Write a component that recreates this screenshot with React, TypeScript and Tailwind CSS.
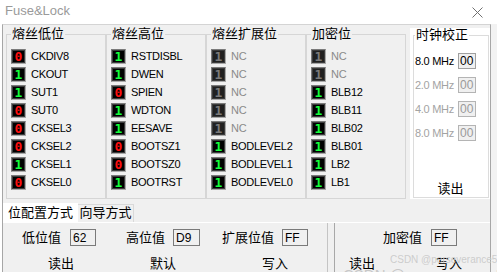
import React from "react";

type Bit = { v: string; name: string; nc?: boolean };

const low: Bit[] = [
  { v: "0", name: "CKDIV8" },
  { v: "1", name: "CKOUT" },
  { v: "1", name: "SUT1" },
  { v: "0", name: "SUT0" },
  { v: "0", name: "CKSEL3" },
  { v: "0", name: "CKSEL2" },
  { v: "1", name: "CKSEL1" },
  { v: "0", name: "CKSEL0" },
];
const high: Bit[] = [
  { v: "1", name: "RSTDISBL" },
  { v: "1", name: "DWEN" },
  { v: "0", name: "SPIEN" },
  { v: "1", name: "WDTON" },
  { v: "1", name: "EESAVE" },
  { v: "0", name: "BOOTSZ1" },
  { v: "0", name: "BOOTSZ0" },
  { v: "1", name: "BOOTRST" },
];
const ext: Bit[] = [
  { v: "1", name: "NC", nc: true },
  { v: "1", name: "NC", nc: true },
  { v: "1", name: "NC", nc: true },
  { v: "1", name: "NC", nc: true },
  { v: "1", name: "NC", nc: true },
  { v: "1", name: "BODLEVEL2" },
  { v: "1", name: "BODLEVEL1" },
  { v: "1", name: "BODLEVEL0" },
];
const lock: Bit[] = [
  { v: "1", name: "NC", nc: true },
  { v: "1", name: "NC", nc: true },
  { v: "1", name: "BLB12" },
  { v: "1", name: "BLB11" },
  { v: "1", name: "BLB02" },
  { v: "1", name: "BLB01" },
  { v: "1", name: "LB2" },
  { v: "1", name: "LB1" },
];

function Indicator({ v, nc }: { v: string; nc?: boolean }) {
  const color = nc ? "text-[#7a7a7a]" : v === "1" ? "text-[#14ff3c]" : "text-[#ff1010]";
  return (
    <div
      className={`flex h-[15px] w-[15px] shrink-0 items-center justify-center border border-t-[#7a7a7a] border-l-[#7a7a7a] border-b-[#a8a8a8] border-r-[#a8a8a8] shadow-[inset_0_0_0_1px_#3c3c3c] ${
        nc ? "bg-[#202020]" : "bg-black"
      }`}
    >
      <span className={`font-['DejaVu_Sans_Mono',monospace] text-[13px] font-bold leading-none ${color}`}>{v}</span>
    </div>
  );
}

function Group({ title, bits }: { title: string; bits: Bit[] }) {
  return (
    <fieldset className="h-[172px] w-[100px] shrink-0 border border-[#d6d6d6]">
      <legend className="ml-[4px] px-[1px] text-[13px] leading-[14px] text-black">{title}</legend>
      <div className="pl-[4px] pt-[6px]">
        {bits.map((b, i) => (
          <div key={i} className="flex h-[18px] items-center gap-[5px]">
            <Indicator v={b.v} nc={b.nc} />
            <span
              className={`whitespace-nowrap text-[11px] leading-none tracking-[-0.3px] ${
                b.nc ? "text-[#8a8a8a]" : "text-black"
              }`}
            >
              {b.name}
            </span>
          </div>
        ))}
      </div>
    </fieldset>
  );
}

const clocks = [
  { f: "8.0 MHz", on: true },
  { f: "2.0 MHz", on: false },
  { f: "4.0 MHz", on: false },
  { f: "8.0 MHz", on: false },
];

export default function App() {
  return (
    <div className="relative h-[272px] w-[497px] overflow-hidden bg-white font-['Liberation_Sans','Noto_Sans_CJK_SC',sans-serif] text-black">
      {/* title bar */}
      <div className="flex h-[24px] items-start justify-between">
        <span className="pl-[5px] pt-[4px] text-[13px] leading-[13px] text-[#9a9a9a]">Fuse&amp;Lock</span>
        <svg className="mr-[14px] mt-[7px]" width="11" height="11" viewBox="0 0 11 11">
          <path d="M0.5 0.5 L10.5 10.5 M10.5 0.5 L0.5 10.5" stroke="#707070" strokeWidth="1" fill="none" />
        </svg>
      </div>

      <div className="flex h-[248px]">
        <div className="w-[2px] bg-white" />
        <div className="flex w-[489px] flex-col border-l border-r border-t border-l-[#a6a6a6] border-r-[#a6a6a6] border-t-[#d4d4d4] bg-[#f0f0f0]">
          {/* groups */}
          <div className="flex pl-[3px] pt-[2px]">
            <Group title="熔丝低位" bits={low} />
            <Group title="熔丝高位" bits={high} />
            <Group title="熔丝扩展位" bits={ext} />
            <Group title="加密位" bits={lock} />
            <div className="ml-[4px] mt-[1px] h-[171px] w-[80px] shrink-0 bg-white pl-[3px]">
              <fieldset className="h-[170px] w-[76px] border border-[#dcdcdc]">
                <legend className="ml-[1px] px-[1px] text-[13px] leading-[14px] text-black">时钟校正</legend>
                <div className="pl-[1px] pt-[7px]">
                  {clocks.map((c, i) => (
                    <div key={i} className="flex h-[24px] items-center">
                      <span
                        className={`w-[43px] whitespace-nowrap text-[11px] leading-none tracking-[-0.3px] ${
                          c.on ? "text-black" : "text-[#a3a3a3]"
                        }`}
                      >
                        {c.f}
                      </span>
                      <div
                        className={`flex h-[16px] w-[18px] items-center border bg-[#f0f0f0] pl-[1px] text-[12px] leading-none ${
                          c.on ? "border-[#a0a0a0] text-black" : "border-[#b4b4b4] text-[#9a9a9a]"
                        }`}
                      >
                        00
                      </div>
                    </div>
                  ))}
                  <div className="mt-[35px] pr-[2px] text-center text-[13px] leading-[17px]">读出</div>
                </div>
              </fieldset>
            </div>
          </div>

          {/* tabs */}
          <div className="mt-[4px] flex h-[19px]">
            <div className="w-[75px] bg-white text-center text-[13px] leading-[19px]">位配置方式</div>
            <div className="mt-[1px] h-[18px] w-[56px] border-r border-t border-[#d9d9d9] text-center text-[13px] leading-[16px]">
              向导方式
            </div>
          </div>

          {/* panel */}
          <div className="flex flex-1 border-t border-white">
            <div className="w-[325px] border-r border-[#c4c4c4] pt-[6px]">
              <div className="flex h-[17px] items-center text-[13px] leading-[17px]">
                <span className="ml-[19px] w-[39px]">低位值</span>
                <div className="ml-[9px] flex h-[17px] w-[26px] items-center border border-[#7a7a7a] pl-[2px] text-[12px] leading-none">62</div>
                <span className="ml-[30px] w-[39px]">高位值</span>
                <div className="ml-[8px] flex h-[17px] w-[27px] items-center border border-[#7a7a7a] pl-[2px] text-[12px] leading-none">D9</div>
                <span className="ml-[22px] w-[52px]">扩展位值</span>
                <div className="ml-[8px] flex h-[17px] w-[26px] items-center border border-[#7a7a7a] pl-[2px] text-[12px] leading-none">FF</div>
              </div>
              <div className="mt-[9px] flex text-[13px] leading-[17px]">
                <span className="ml-[45px] w-[26px]">读出</span>
                <span className="ml-[76px] w-[26px]">默认</span>
                <span className="ml-[86px] w-[26px]">写入</span>
              </div>
            </div>
            <div className="ml-[6px] flex-1 border-l border-[#a8a8a8] pt-[6px]">
              <div className="flex h-[17px] items-center text-[13px] leading-[17px]">
                <span className="ml-[48px] w-[39px]">加密值</span>
                <div className="ml-[9px] flex h-[17px] w-[26px] items-center border border-[#7a7a7a] pl-[2px] text-[12px] leading-none">FF</div>
              </div>
              <div className="mt-[9px] flex text-[13px] leading-[17px]">
                <span className="ml-[14px] w-[26px]">读出</span>
                <span className="ml-[61px] w-[26px]">写入</span>
              </div>
            </div>
          </div>
        </div>
        <div className="flex-1 bg-[#f2f2f2]" />
      </div>

      {/* watermark */}
      <div className="pointer-events-none absolute left-[390px] top-[255px] whitespace-nowrap text-[10px] leading-none text-[#c8c8c8]/90">
        CSDN @perseverance52
      </div>
      <div className="pointer-events-none absolute left-[343px] top-[267px] whitespace-nowrap text-[15px] leading-none text-[#bdbdbd]/80">
        CSDN @perseverance52
      </div>
    </div>
  );
}
